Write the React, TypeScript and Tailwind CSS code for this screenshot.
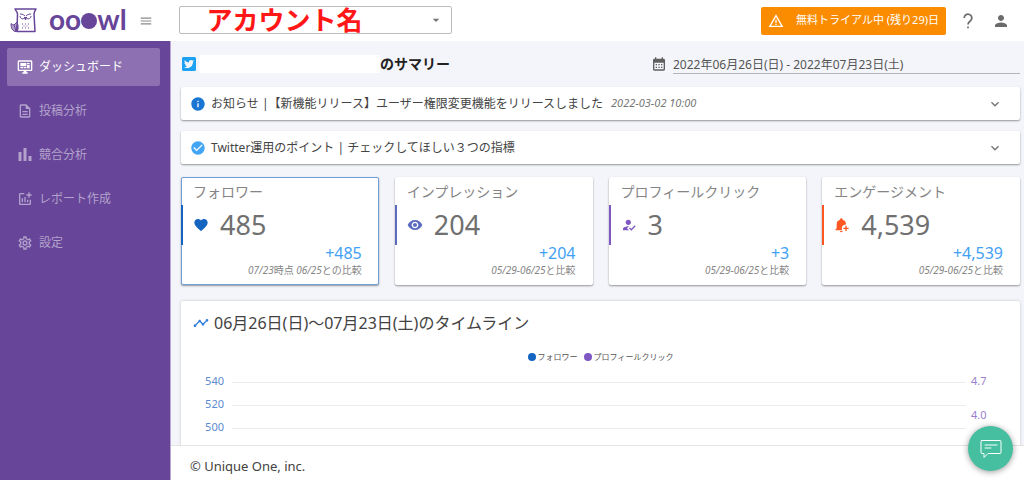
import type { ReactNode } from "react";
import { FaTwitterSquare } from "react-icons/fa";
import {
  MdArrowDropDown,
  MdCalendarMonth,
  MdCheckCircle,
  MdExpandMore,
  MdFavorite,
  MdHowToReg,
  MdInfo,
  MdMenu,
  MdOutlineAddchart,
  MdOutlineDescription,
  MdOutlineSettings,
  MdPerson,
  MdTimeline,
  MdVisibility,
  MdWarningAmber,
} from "react-icons/md";

const MonitorIcon = () => (
  <svg viewBox="0 0 24 24" fill="currentColor" className="size-4">
    <path d="M21,16V4H3V16H21M21,2A2,2 0 0,1 23,4V16A2,2 0 0,1 21,18H14V20H16V22H8V20H10V18H3C1.89,18 1,17.1 1,16V4C1,2.89 1.89,2 3,2H21M5,6H14V11H5V6M15,6H19V8H15V6M19,9V14H15V9H19M5,12H9V14H5V12M10,12H14V14H10V12Z" />
  </svg>
);

const BarsIcon = () => (
  <svg viewBox="0 0 16 16" fill="currentColor" className="size-4">
    <path d="M1.5 5h3v9h-3zM6.5 1h3v13h-3zM11.5 9h3v5h-3z" />
  </svg>
);

const BellPlusIcon = () => (
  <svg viewBox="0 0 24 24" fill="currentColor" className="size-4">
    <path d="M11 2a2 2 0 0 0-2 2v.3A7 7 0 0 0 4 11v6l-2 2v1h10.3a6 6 0 0 1 5.7-8.9V11a7 7 0 0 0-5-6.7V4a2 2 0 0 0-2-2zM9 21a2 2 0 0 0 4 0z" />
    <path d="M17 13h2v3h3v2h-3v3h-2v-3h-3v-2h3z" />
  </svg>
);

const HelpIcon = () => (
  <svg
    viewBox="0 0 16 16"
    fill="none"
    stroke="currentColor"
    strokeWidth="1.7"
    className="size-4"
  >
    <path d="M4.2 5a3.8 3.8 0 1 1 6.4 2.700C9.200 8.900 8 9.500 8 11.500" />
    <path d="M8 13.400v1.900" />
  </svg>
);

const OwlIcon = () => (
  <svg
    viewBox="0 0 27 25"
    fill="none"
    stroke="currentColor"
    strokeWidth="1"
    strokeLinejoin="round"
    className="h-[25px] w-[27px]"
  >
    <path d="M5 1h21c-1 2-2 3-2 5l1 17.500H7L7.500 6C7.500 4 6 3 5 1z" strokeWidth="1.500" />
    <path d="M10 6c1 0 3 0 5 2M21 6c-1 0-3 0-5 2M10 8c0 3 4 4 5 1M21 8c0 3-4 4-5 1" />
    <path d="M14.500 9.500l1 2.500 1-2.500z" fill="currentColor" />
    <path d="M12 16h1M15 16h1M18 16h1M13.500 18h1M16.500 18h1M12 20h1M15 20h1M18 20h1" />
    <path
      d="M1 15.500c1 1 2 1 3 1.500l3-3c1 3 2 6 0 9.500H5c-3-1-4-4-4-8z"
      fill="currentColor"
      fillOpacity="0.5"
    />
    <path d="M4 17l2 6M7 17l-1 6" />
  </svg>
);

const ChatIcon = () => (
  <svg
    viewBox="0 0 22 20"
    fill="none"
    stroke="currentColor"
    strokeLinecap="round"
    strokeLinejoin="round"
    className="h-5 w-[22px]"
  >
    <path d="M2 1.5h18a1 1 0 0 1 1 1v11a1 1 0 0 1-1 1H8l-4 4v-4H2a1 1 0 0 1-1-1v-11a1 1 0 0 1 1-1z" />
    <path d="M5 6h12M5 9h6" />
  </svg>
);

const navItems = [
  { label: "ダッシュボード", icon: <MonitorIcon />, active: true },
  { label: "投稿分析", icon: <MdOutlineDescription size={16} /> },
  { label: "競合分析", icon: <BarsIcon /> },
  { label: "レポート作成", icon: <MdOutlineAddchart size={16} /> },
  { label: "設定", icon: <MdOutlineSettings size={16} /> },
];

const stats = [
  {
    title: "フォロワー",
    value: "485",
    diff: "+485",
    note: "07/23時点 06/25との比較",
    icon: <MdFavorite size={16} />,
    accent: "text-[#1565c0]",
    selected: true,
  },
  {
    title: "インプレッション",
    value: "204",
    diff: "+204",
    note: "05/29-06/25と比較",
    icon: <MdVisibility size={16} />,
    accent: "text-[#5c6bc0]",
  },
  {
    title: "プロフィールクリック",
    value: "3",
    diff: "+3",
    note: "05/29-06/25と比較",
    icon: <MdHowToReg size={16} />,
    accent: "text-[#7e57c2]",
  },
  {
    title: "エンゲージメント",
    value: "4,539",
    diff: "+4,539",
    note: "05/29-06/25と比較",
    icon: <BellPlusIcon />,
    accent: "text-[#ff5722]",
  },
];

const cardShadow = "shadow-[0_1px_2px_rgba(0,0,0,0.4)]";

const Header = () => (
  <header className="flex h-[41px] shrink-0 items-center bg-white pr-[14px] pl-[10px]">
    <a href="#" aria-label="ooowl" className="flex items-center text-[#674598]">
      <OwlIcon />
      <span className="ml-3 flex items-center pb-1 font-[Lato] text-[28px] leading-8 font-bold">
        oo
        <span className="mt-[5px] size-4 rounded-full bg-current" />
        wl
      </span>
    </a>
    <button aria-label="メニュー" className="ml-3 text-[#8a8a8a]">
      <MdMenu size={14} />
    </button>
    <div className="relative ml-[26px] w-[273px]">
      <select
        aria-label="アカウント"
        className="h-7 w-full appearance-none rounded-xs border border-[#bdbdbd] bg-white pl-[27px] text-[26px] leading-[26px] font-bold text-[#ff1616]"
      >
        <option>アカウント名</option>
      </select>
      <MdArrowDropDown
        size={16}
        className="pointer-events-none absolute top-[6px] right-2 text-[#757575]"
      />
    </div>
    <button className="ml-auto flex h-7 items-center rounded-xs bg-[#fb8c00] px-[7px] text-[11px] whitespace-nowrap text-white">
      <MdWarningAmber size={16} className="mr-3" />
      無料トライアル中 (残り29)日
    </button>
    <button aria-label="ヘルプ" className="ml-[14px] text-[#6b6b6b]">
      <HelpIcon />
    </button>
    <button aria-label="ユーザー" className="ml-4 text-[#6b6b6b]">
      <MdPerson size={18} />
    </button>
  </header>
);

const Sidebar = () => (
  <nav className="flex w-[171px] shrink-0 flex-col gap-[6px] border-r border-[#b9a6d2] bg-[#674598] pt-[7px] pr-[10px] pl-[7px]">
    {navItems.map(({ label, icon, active }) => (
      <a
        key={label}
        href="#"
        className={`flex h-[38px] items-center gap-[6px] rounded-xs pl-[10px] text-xs ${
          active ? "bg-[#8c70b1] text-white" : "text-[#b3a2cc]"
        }`}
      >
        {icon}
        {label}
      </a>
    ))}
  </nav>
);

const Notice = ({ icon, children }: { icon: ReactNode; children: ReactNode }) => (
  <button
    className={`flex h-[33px] w-full items-center rounded-xs bg-white pr-[17px] pl-[9px] text-left text-xs text-[#444] ${cardShadow}`}
  >
    {icon}
    {children}
    <MdExpandMore size={16} className="ml-auto text-[#757575]" />
  </button>
);

const StatCard = ({ stat }: { stat: (typeof stats)[number] }) => {
  const { title, value, diff, note, icon, accent, selected } = stat;

  return (
    <article
      className={`h-[108px] rounded-xs border bg-white ${cardShadow} ${
        selected ? "border-[#6f9fd8]" : "border-white"
      }`}
    >
      <h3 className="h-[27px] pl-[11px] text-sm leading-[27px] text-[#858585]">
        {title}
      </h3>
      <div
        className={`-ml-px flex h-10 items-center gap-[11px] border-l-2 border-current pl-[10px] ${accent}`}
      >
        {icon}
        <span className="text-[27px] leading-10 text-[#707070]">{value}</span>
      </div>
      <div className="pr-4 text-right">
        <p className="text-base leading-4 text-[#42a0f5]">{diff}</p>
        <p className="mt-px text-[10px] leading-4 text-[#858585] italic">
          {note}
        </p>
      </div>
    </article>
  );
};

const Timeline = () => (
  <section className="mt-4 shrink-0 rounded-xs bg-white pt-[10px] shadow-[0_0_3px_rgba(0,0,0,0.2)]">
    <h2 className="flex items-center gap-[5px] pl-3 text-base leading-6 text-[#424242]">
      <MdTimeline size={16} className="text-[#2f7de1]" />
      06月26日(日)～07月23日(土)のタイムライン
    </h2>
    <ul className="mt-4 flex justify-center gap-[6px] text-[8px] leading-3 text-[#555]">
      <li className="flex items-center gap-[2px]">
        <span className="size-2 rounded-full bg-[#1565c0]" />
        フォロワー
      </li>
      <li className="flex items-center gap-[2px]">
        <span className="size-2 rounded-full bg-[#7e57c2]" />
        プロフィールクリック
      </li>
    </ul>
    {/* Chart axes */}
    <div className="mt-[6px] flex pb-4 text-[11px]">
      <div className="w-[51px] pr-2 text-right leading-[23px] text-[#5b8bd0]">
        <p>540</p>
        <p>520</p>
        <p>500</p>
      </div>
      <div className="flex-1 pt-[13px]">
        <div className="h-[23px] border-t border-[#ececec]" />
        <div className="h-[23px] border-t border-[#ececec]" />
        <div className="h-[23px] border-t border-[#ececec]" />
      </div>
      <div className="w-[54px] pl-[5px] leading-[34px] text-[#9a7fd0]">
        <p className="-mt-[5px]">4.7</p>
        <p>4.0</p>
      </div>
    </div>
  </section>
);

export default function App() {
  return (
    <div className="relative flex h-screen flex-col overflow-hidden bg-[#f4f5fa] font-['Noto_Sans','Noto_Sans_CJK_JP',sans-serif] [font-synthesis:weight]">
      <Header />
      <div className="flex min-h-0 flex-1">
        <Sidebar />
        <div className="flex min-w-0 flex-1 flex-col">
          <main className="flex min-h-0 flex-1 flex-col overflow-y-auto pr-1 pl-[10px] [scrollbar-width:none]">
            <div className="flex h-[46px] shrink-0 items-center">
              <FaTwitterSquare size={16} className="text-[#1da1f2]" />
              <span className="ml-[2px] h-[18px] w-[181px] bg-white" />
              <h1 className="text-sm font-bold text-[#222]">のサマリー</h1>
              <label htmlFor="period" className="ml-auto text-[#5f5f5f]">
                <MdCalendarMonth size={16} />
              </label>
              <input
                id="period"
                aria-label="期間"
                readOnly
                value="2022年06月26日(日) - 2022年07月23日(土)"
                className="ml-[6px] h-5 w-[347px] border-b border-[#b5b5b8] bg-transparent text-xs text-[#555] outline-none"
              />
            </div>
            <div className="flex shrink-0 flex-col gap-[11px]">
              <Notice
                icon={<MdInfo size={16} className="mr-[5px] text-[#1976d2]" />}
              >
                お知らせ |【新機能リリース】ユーザー権限変更機能をリリースしました
                <time className="ml-2 text-[11px] text-[#757575] italic">
                  2022-03-02 10:00
                </time>
              </Notice>
              <Notice
                icon={
                  <MdCheckCircle size={16} className="mr-[5px] text-[#42a5f5]" />
                }
              >
                Twitter運用のポイント | チェックしてほしい３つの指標
              </Notice>
            </div>
            <div className="mt-[13px] grid shrink-0 grid-cols-4 gap-4">
              {stats.map((stat) => (
                <StatCard key={stat.title} stat={stat} />
              ))}
            </div>
            <Timeline />
          </main>
          <footer className="flex h-[35px] shrink-0 items-center border-t border-[#e4e4e6] bg-white pt-2 pl-[19px] text-[13px] text-[#424242]">
            © Unique One, inc.
          </footer>
        </div>
      </div>
      <button
        aria-label="チャット"
        className="absolute right-[11px] bottom-[9px] flex size-[45px] items-center justify-center rounded-full bg-[#45bfa0] text-white shadow-[0_1px_6px_rgba(0,0,0,0.4)]"
      >
        <ChatIcon />
      </button>
    </div>
  );
}
